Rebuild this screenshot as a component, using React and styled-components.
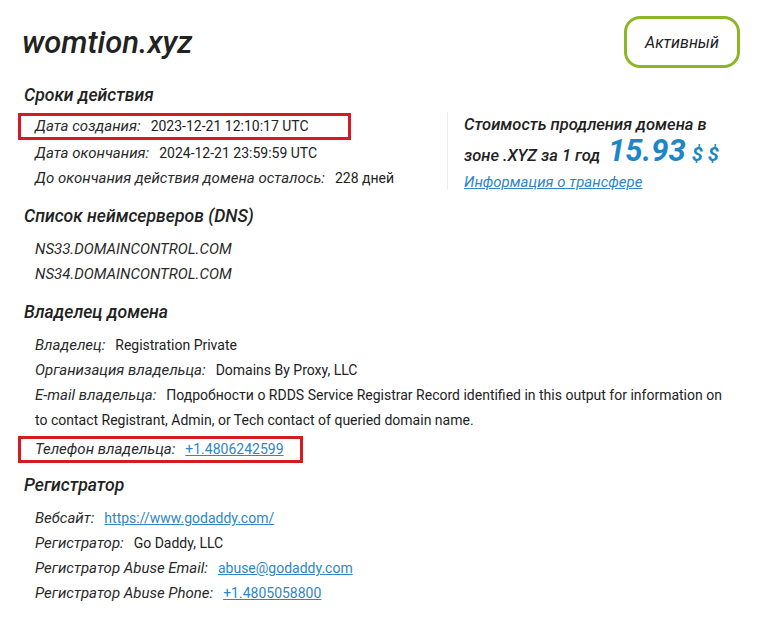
import React from "react";
import styled, { createGlobalStyle } from "styled-components";

const GlobalStyle = createGlobalStyle`
  body {
    margin: 0;
    background: #fff;
    font-family: Roboto, "Noto Sans", sans-serif;
    color: #222;
  }
`;

const Page = styled.div`
  width: 765px;
  height: 625px;
  box-sizing: border-box;
  padding: 16px 25px 0 22px;
  overflow: hidden;
`;

const Header = styled.div`
  display: flex;
  justify-content: space-between;
  align-items: center;
  height: 52px;
`;

const Title = styled.h1`
  margin: 0;
  font-size: 31px;
  font-weight: 500;
  font-style: italic;
  color: #222;
`;

const Badge = styled.div`
  width: 116px;
  height: 52px;
  box-sizing: border-box;
  border: 3px solid #8cb624;
  border-radius: 16px;
  display: flex;
  align-items: center;
  justify-content: center;
  font-size: 16px;
  font-style: italic;
  font-weight: 400;
`;

const Top = styled.div`
  display: flex;
  margin-top: 14px;
`;

const LeftCol = styled.div`
  width: 425px;
`;

const Section = styled.section`
  margin-top: ${(p) => (p.$gap === undefined ? 12 : p.$gap)}px;
  padding-left: 2px;
`;

const Heading = styled.h2`
  margin: 0 0 8px;
  font-size: 17.6px;
  line-height: 26px;
  font-weight: 500;
  font-style: italic;
  color: #222;
`;

const Row = styled.div`
  padding-left: 11px;
  font-size: 14px;
  line-height: 25px;
  ${(p) =>
    p.$mark &&
    `
    border: 3px solid #d71920;
    width: ${p.$mark}px;
    height: 27px;
    box-sizing: border-box;
    margin: ${p.$shift || 0}px 0 ${-(p.$shift || 0) - 2}px -6px;
    padding-left: 14px;
    line-height: 21px;
  `}
`;

const Label = styled.span`
  font-style: italic;
  font-size: 15px;
  color: #2a2a2a;
  margin-right: 10px;
`;

const Value = styled.span`
  color: #222;
`;

const Link = styled.a`
  color: #2f86c3;
  text-decoration: underline;
`;

const PricePanel = styled.div`
  margin-top: 30px;
  height: 78px;
  border-left: 1px solid #ececec;
  padding-left: 16px;
  font-size: 16.5px;
  font-style: italic;
  font-weight: 500;
  line-height: 26px;
`;

const Price = styled.span`
  display: inline-block;
  line-height: 26px;
  color: #1b87c9;
  font-size: 31px;
  font-weight: 700;
  margin-left: 8px;
`;

const Currency = styled.span`
  color: #1b87c9;
  font-size: 20px;
  font-weight: 700;
  margin-left: 6px;
`;

const SmallLink = styled(Link)`
  font-size: 15px;
  font-weight: 400;
`;

const Field = ({ label, children, mark, shift }) => (
  <Row $mark={mark} $shift={shift}>
    <Label>{label}:</Label>
    <Value>{children}</Value>
  </Row>
);

export default function App() {
  return (
    <>
      <GlobalStyle />
      <Page>
        <Header>
          <Title>womtion.xyz</Title>
          <Badge>Активный</Badge>
        </Header>

        <Top>
          <LeftCol>
            <Section $gap={0}>
              <Heading>Сроки действия</Heading>
              <Field label="Дата создания" mark={333} shift={-3}>
                2023-12-21 12:10:17 UTC
              </Field>
              <Field label="Дата окончания">2024-12-21 23:59:59 UTC</Field>
              <Field label="До окончания действия домена осталось">228 дней</Field>
            </Section>
          </LeftCol>
          <PricePanel>
            Стоимость продления домена в
            <br />
            зоне .XYZ за 1 год<Price>15.93</Price>
            <Currency>$ $</Currency>
            <br />
            <SmallLink href="#">Информация о трансфере</SmallLink>
          </PricePanel>
        </Top>

        <Section>
          <Heading>Список неймсерверов (DNS)</Heading>
          <Row>
            <Label>NS33.DOMAINCONTROL.COM</Label>
          </Row>
          <Row>
            <Label>NS34.DOMAINCONTROL.COM</Label>
          </Row>
        </Section>

        <Section>
          <Heading>Владелец домена</Heading>
          <Field label="Владелец">Registration Private</Field>
          <Field label="Организация владельца">Domains By Proxy, LLC</Field>
          <Row>
            <Label>E-mail владельца:</Label>
            <Value>
              Подробности о RDDS Service Registrar Record identified in this output for
              information on
              <br />
              to contact Registrant, Admin, or Tech contact of queried domain name.
            </Value>
          </Row>
          <Row $mark={285} $shift={3}>
            <Label>Телефон владельца:</Label>
            <Link href="#">+1.4806242599</Link>
          </Row>
        </Section>

        <Section $gap={14}>
          <Heading>Регистратор</Heading>
          <Row>
            <Label>Вебсайт:</Label>
            <Link href="#">https://www.godaddy.com/</Link>
          </Row>
          <Field label="Регистратор">Go Daddy, LLC</Field>
          <Row>
            <Label>Регистратор Abuse Email:</Label>
            <Link href="#">abuse@godaddy.com</Link>
          </Row>
          <Row>
            <Label>Регистратор Abuse Phone:</Label>
            <Link href="#">+1.4805058800</Link>
          </Row>
        </Section>
      </Page>
    </>
  );
}
